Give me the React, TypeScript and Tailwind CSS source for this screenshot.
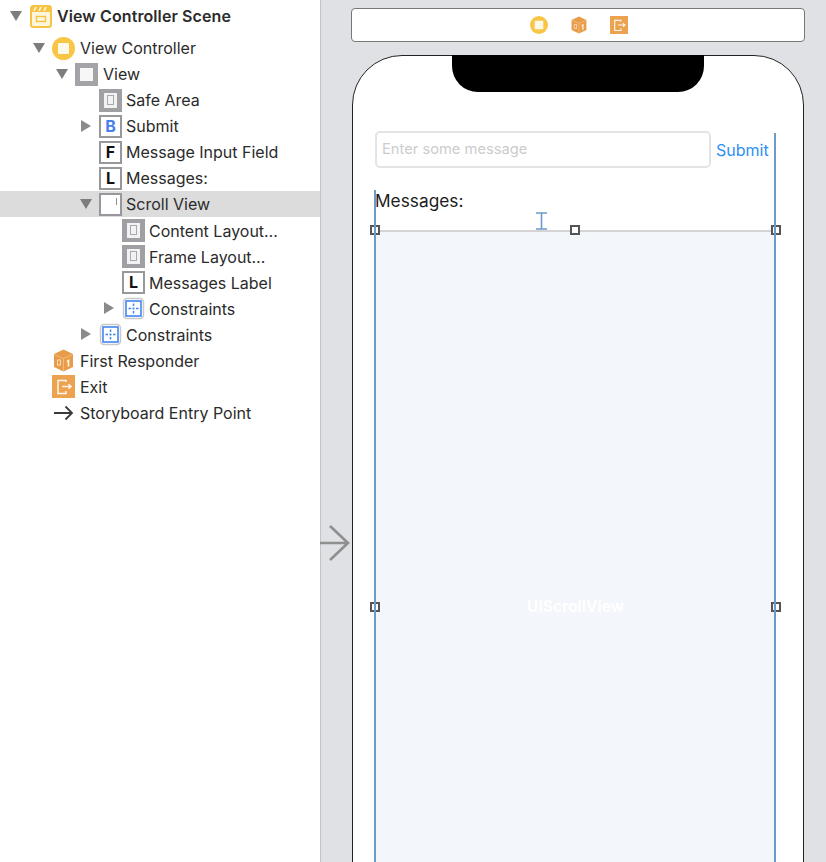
const FONT = "font-['Inter','Noto_Sans',sans-serif]";

type IconKind =
  | "scene"
  | "controller"
  | "view"
  | "layout"
  | "B"
  | "F"
  | "L"
  | "scroll"
  | "constraints"
  | "responder"
  | "exit"
  | "entry";

type Row = {
  label: string;
  depth: number;
  icon: IconKind;
  arrow?: "down" | "right";
  selected?: boolean;
  bold?: boolean;
  low?: boolean;
};

const rows: Row[] = [
  { label: "View Controller", depth: 1, icon: "controller", arrow: "down" },
  { label: "View", depth: 2, icon: "view", arrow: "down" },
  { label: "Safe Area", depth: 3, icon: "layout" },
  { label: "Submit", depth: 3, icon: "B", arrow: "right" },
  { label: "Message Input Field", depth: 3, icon: "F" },
  { label: "Messages:", depth: 3, icon: "L" },
  { label: "Scroll View", depth: 3, icon: "scroll", arrow: "down", selected: true },
  { label: "Content Layout…", depth: 4, icon: "layout", low: true },
  { label: "Frame Layout…", depth: 4, icon: "layout", low: true },
  { label: "Messages Label", depth: 4, icon: "L", low: true },
  { label: "Constraints", depth: 4, icon: "constraints", arrow: "right", low: true },
  { label: "Constraints", depth: 3, icon: "constraints", arrow: "right", low: true },
  { label: "First Responder", depth: 1, icon: "responder", low: true },
  { label: "Exit", depth: 1, icon: "exit", low: true },
  { label: "Storyboard Entry Point", depth: 1, icon: "entry", low: true },
];

const indents = ["pl-[10px]", "pl-[33px]", "pl-[56px]", "pl-[80px]", "pl-[103px]"];

const Disclosure = ({ dir }: { dir?: "down" | "right" }) => (
  <svg width="12" height="12" viewBox="0 0 12 12" className="shrink-0">
    {dir === "down" && <path d="M0 1h12L6 11z" fill="#7d7d7d" />}
    {dir === "right" && <path d="M1 0v12l10-6z" fill="#8a8a8a" />}
  </svg>
);

const ControllerIcon = ({ size = 23 }: { size?: number }) => (
  <svg width={size} height={size} viewBox="0 0 23 23">
    <circle cx="11.5" cy="11.5" r="11.5" fill="#f8c544" />
    <rect x="6" y="6" width="11" height="11" rx="1" fill="#fdf8ec" />
  </svg>
);

const ResponderIcon = ({ size = 23 }: { size?: number }) => (
  <svg width={size} height={size} viewBox="0 0 23 23">
    <path d="M11.5 0.5 21 5v13l-9.5 4.5L2 18V5z" fill="#e89c4a" />
    <path d="M2.5 5.5l9 4 9-4M11.5 9.5v12.5" stroke="#f3bd82" strokeWidth="1" fill="none" />
    <rect x="5.5" y="11" width="3" height="5" fill="none" stroke="#f8dcbc" strokeWidth="1" />
    <path d="M15 12.5l1.5-1v6" stroke="#fdf3e6" strokeWidth="1.6" fill="none" />
  </svg>
);

const ExitIcon = ({ size = 23 }: { size?: number }) => (
  <svg width={size} height={size} viewBox="0 0 23 23">
    <rect width="23" height="23" fill="#eca24f" />
    <path d="M14 7V5.5H6v13h8V16" stroke="#fdf6ec" strokeWidth="1.5" fill="none" />
    <path d="M10 11.5h9M16.5 9.3l2.6 2.2-2.6 2.2" stroke="#fdf6ec" strokeWidth="1.4" fill="none" />
  </svg>
);

const TreeIcon = ({ kind }: { kind: IconKind }) => {
  if (kind === "scene") {
    return (
      <svg width="22" height="23" viewBox="0 0 22 23">
        <rect x="1" y="1" width="20" height="21" rx="2.5" fill="#fdf6dc" stroke="#f6c343" strokeWidth="2" />
        <path d="M1 2.5a1.5 1.5 0 0 1 1.5-1.5h17A1.5 1.5 0 0 1 21 2.5V7H1z" fill="#f6c343" />
        <path d="M4 6l2-4M9 6l2-4M14 6l2-4" stroke="#fdf6dc" strokeWidth="1.6" />
        <rect x="6.5" y="11.5" width="9" height="5" fill="#fdf6dc" stroke="#f6c343" strokeWidth="1.4" />
      </svg>
    );
  }
  if (kind === "controller") return <ControllerIcon />;
  if (kind === "responder") return <ResponderIcon />;
  if (kind === "exit") return <ExitIcon />;
  if (kind === "entry") {
    return (
      <svg width="23" height="23" viewBox="0 0 23 23">
        <path d="M2 12h18M13.5 5.5l6.5 6.5-6.5 6.5" stroke="#3a3a3a" strokeWidth="1.8" fill="none" />
      </svg>
    );
  }
  if (kind === "constraints") {
    return (
      <svg width="23" height="23" viewBox="0 0 23 23">
        <rect x="1.5" y="1.5" width="20" height="20" rx="3.5" fill="#fff" stroke="#c9c9c9" strokeWidth="1.5" />
        <rect x="4" y="4" width="15" height="15" fill="#fff" stroke="#3f86f2" strokeWidth="1.6" />
        <path d="M11.5 6.5v2.5M11.5 10.5v2M11.5 14v2.5M6.5 11.5H9M10.5 11.5h2M14 11.5h2.5" stroke="#3f86f2" strokeWidth="1.5" />
      </svg>
    );
  }
  if (kind === "view") {
    return (
      <div className="w-[23px] h-[23px] bg-[#a3a3a8] flex items-center justify-center">
        <div className="w-[13px] h-[13px] bg-[#f7f7f8]" />
      </div>
    );
  }
  if (kind === "layout") {
    return (
      <div className="w-[23px] h-[23px] bg-[#9f9fa4] flex items-center justify-center">
        <div className="w-[13px] h-[15px] bg-[#f2f2f3] flex items-center justify-center">
          <div className="w-[7px] h-[10px] border border-[#a8a8ac]" />
        </div>
      </div>
    );
  }
  if (kind === "scroll") {
    return (
      <div className="w-[23px] h-[23px] border-2 border-[#98989c] bg-white flex justify-end pt-[3px] pr-[3px]">
        <div className="w-px h-[7px] bg-[#8f8f8f]" />
      </div>
    );
  }
  return (
    <div
      className={`w-[23px] h-[23px] border-2 border-[#98989c] bg-white flex items-center justify-center text-[16px] font-bold leading-none ${
        kind === "B" ? "text-[#4a80ea]" : "text-[#111111]"
      }`}
    >
      {kind}
    </div>
  );
};

const TreeRow = ({ row }: { row: Row }) => (
  <div
    className={`h-[26px] flex items-center ${indents[row.depth]} ${
      row.selected ? "bg-[#dcdcdc]" : ""
    }`}
  >
    <Disclosure dir={row.arrow} />
    <div className="w-[23px] ml-[7px] shrink-0 flex items-center justify-center">
      <TreeIcon kind={row.icon} />
    </div>
    <span
      className={`text-[16px] whitespace-nowrap text-[#2b2b2b] ${row.depth >= 3 ? "ml-[4px]" : "ml-[5px]"} ${
        row.low ? "pt-[2px]" : ""
      } ${row.bold ? "font-semibold tracking-[0.1px]" : ""}`}
    >
      {row.label}
    </span>
  </div>
);

const Handle = ({ className }: { className: string }) => (
  <div className={`absolute w-[10px] h-[10px] bg-white border-2 border-[#555555] ${className}`} />
);

export default function App() {
  return (
    <div className={`w-[826px] h-[862px] overflow-hidden flex bg-white ${FONT}`}>
      {/* Outline */}
      <aside className="w-[321px] shrink-0 pt-[3px] bg-white border-r border-[#c4c4c4]">
        <div className="mb-[6px]">
          <TreeRow row={{ label: "View Controller Scene", depth: 0, icon: "scene", arrow: "down", bold: true }} />
        </div>
        {rows.map((row, i) => (
          <TreeRow key={i} row={row} />
        ))}
      </aside>

      {/* Canvas */}
      <main className="relative flex-1 bg-[#e0e1e5] pt-[8px] pl-[30px]">
        <div className="w-[454px] h-[34px] bg-white border border-[#777777] rounded-[4px] flex items-center justify-center gap-[22px] pl-[2px]">
          <ControllerIcon size={18} />
          <ResponderIcon size={18} />
          <ExitIcon size={18} />
        </div>

        <div className="relative mt-[13px] ml-px w-[452px] h-[900px] bg-white border-[1.5px] border-[#222222] rounded-t-[50px]">
          {/* Notch */}
          <div className="absolute top-[-1px] left-[99px] w-[252px] h-[37px] bg-black rounded-b-[26px]" />

          <div className="pt-[75px] pl-[22px] flex items-center">
            <div className="w-[336px] h-[37px] border-2 border-[#e4e4e4] rounded-[5px] flex items-center pl-[5px] text-[14.7px] text-[#cccccc]">
              Enter some message
            </div>
            <span className="ml-[5px] text-[16px] text-[#2f8ff5]">Submit</span>
          </div>

          <div className="mt-[21px] ml-[22px] text-[17.3px] leading-[24px] text-[#1c1c1c]">Messages:</div>

          <div className="relative mt-[17px] ml-[22px] w-[401px] h-[640px] bg-[#f3f6fb] border-t-2 border-[#d4d4d6]">
            <div className="absolute top-[363px] left-0 right-0 text-center text-[15.5px] font-bold text-white">
              UIScrollView
            </div>
            <Handle className="-top-[7px] -left-[5px]" />
            <Handle className="-top-[7px] left-[195px]" />
            <Handle className="-top-[7px] -right-[5px]" />
            <Handle className="top-[370px] -left-[5px]" />
            <Handle className="top-[370px] -right-[5px]" />
          </div>

          {/* Selection guides */}
          <div className="absolute top-[134px] left-[21px] w-[2px] h-[800px] bg-[#6e9acb]" />
          <div className="absolute top-[77px] left-[421px] w-[2px] h-[800px] bg-[#6e9acb]" />
          <svg width="11" height="18" viewBox="0 0 11 18" className="absolute top-[156px] left-[183px]">
            <path d="M0 1h11M0 17h11M5.5 1v16" stroke="#6e9acb" strokeWidth="1.6" fill="none" />
          </svg>
        </div>

        {/* Entry point arrow */}
        <svg width="31" height="38" viewBox="0 0 31 38" className="absolute top-[524px] -left-px">
          <path d="M0 19h28M10 2l18 17-18 17" stroke="#8f8f8f" strokeWidth="2.6" fill="none" />
        </svg>
      </main>
    </div>
  );
}
